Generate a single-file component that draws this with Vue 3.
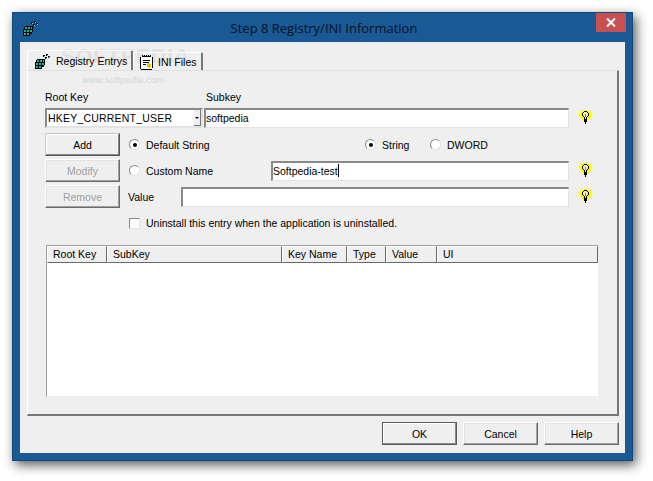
<template>
  <div class="desktop">
    <svg width="0" height="0" class="defs">
      <symbol id="bulb" viewBox="0 0 15 15">
        <path d="M7 0h1v1H7zM2 1h1v1H2zM12 1h1v1h-1zM5 1h5v1H5zM3 2h9v1H3zM2 3h11v6H2zM0 5h2v1H0zM13 5h2v1h-2zM3 9h9v1H3zM4 10h7v1H4zM1 10h1v1H1zM13 10h1v1h-1z" fill="#ffff00" shape-rendering="crispEdges" />
        <path d="M6 2h3v1H6zM5 3h1v1H5zM9 3h1v1H9zM4 4h1v3H4zM10 4h1v3h-1zM5 7h1v1H5zM9 7h1v1H9zM6 8h1v2H6zM8 8h1v2H8zM6 10h3v3H6zM7 13h1v2H7z" fill="#000" shape-rendering="crispEdges" />
        <path d="M6 3h3v1h1v3H9v1H6V7H5V4h1z" fill="#f4f4c0" shape-rendering="crispEdges" />
        <path d="M7 5h1v3H7z" fill="#8a8a30" shape-rendering="crispEdges" />
      </symbol>
      <symbol id="cubes" viewBox="0 0 16 16">
        <path d="M2 7h1V6h8v6h-1v2H8v2H1V9h1z" fill="#000" shape-rendering="crispEdges" />
        <path d="M9 2h2v2H9zM11 4h2v2h-2zM12 1h2v2h-2zM14 3h2v2h-2z" fill="#000" shape-rendering="crispEdges" />
        <path d="M3 7h2v2H3zM6 7h2v2H6zM9 7h1v2H9zM2 10h2v2H2zM5 10h2v2H5zM8 10h2v2H8zM2 13h2v2H2zM5 13h2v2H5z" fill="#19b5a5" shape-rendering="crispEdges" />
        <path d="M10 3h1v1h-1zM12 5h1v1h-1zM13 2h1v1h-1zM15 4h1v1h-1z" fill="#5de0d0" shape-rendering="crispEdges" />
      </symbol>
      <symbol id="notes" viewBox="0 0 16 16">
        <path d="M2 2h11v13H2z" fill="#fff" />
        <path d="M3 1h1v2H3zM5 1h1v2H5zM7 1h1v2H7zM9 1h1v2H9zM11 1h1v2h-1zM1 3h1v12H1zM13 3h1v11h-1zM2 15h11v1H2zM3 2h9v1H3zM4 6h7v1H4zM4 8h6v1H4zM4 10h3v1H4z" fill="#000" shape-rendering="crispEdges" />
        <path d="M8 10h4v3H8zM9 9h2v5H9z" fill="#d8c800" shape-rendering="crispEdges" />
      </symbol>
    </svg>

    <div class="window">
      <div class="titlebar">
        <svg class="app-icon" width="16" height="16"><use href="#cubes" /></svg>
        <span class="title">Step 8 Registry/INI Information</span>
        <div class="close">
          <svg width="10" height="9" viewBox="0 0 10 9">
            <path d="M1 .5l8 8M9 .5l-8 8" stroke="#fff" stroke-width="2" fill="none" />
          </svg>
        </div>
      </div>

      <div class="client">
        <div class="watermark">
          <div class="wm-big">SOFTPEDIA</div>
          <div class="wm-small">www.softpedia.com</div>
        </div>

        <div class="tabs">
          <div class="tab active">
            <svg width="16" height="16"><use href="#cubes" /></svg>
            <span>Registry Entrys</span>
          </div>
          <div class="tab second">
            <svg width="16" height="16"><use href="#notes" /></svg>
            <span>INI Files</span>
          </div>
        </div>

        <div class="page">
          <div class="key-labels">
            <span class="root-label">Root Key</span>
            <span>Subkey</span>
          </div>

          <div class="key-row">
            <div class="combo">
              <span>HKEY_CURRENT_USER</span>
              <div class="combo-arrow"></div>
            </div>
            <div class="edit subkey">softpedia</div>
            <svg class="bulb" width="15" height="15"><use href="#bulb" /></svg>
          </div>

          <div class="form">
            <div class="side-buttons">
              <div class="btn add">Add</div>
              <div class="btn disabled">Modify</div>
              <div class="btn disabled">Remove</div>
            </div>

            <div class="fields">
              <div class="field-row">
                <div class="radio-wrap name-col">
                  <span class="radio checked"></span>
                  <span>Default String</span>
                </div>
                <div class="radio-wrap string-col">
                  <span class="radio checked"></span>
                  <span>String</span>
                </div>
                <div class="radio-wrap">
                  <span class="radio"></span>
                  <span>DWORD</span>
                </div>
              </div>
              <div class="field-row">
                <div class="radio-wrap custom-col">
                  <span class="radio"></span>
                  <span>Custom Name</span>
                </div>
                <div class="edit custom-edit">Softpedia-test<i class="caret"></i></div>
                <svg class="bulb" width="15" height="15"><use href="#bulb" /></svg>
              </div>
              <div class="field-row">
                <span class="value-label">Value</span>
                <div class="edit value-edit"></div>
                <svg class="bulb" width="15" height="15"><use href="#bulb" /></svg>
              </div>
              <div class="check-row">
                <span class="checkbox"></span>
                <span>Uninstall this entry when the application is uninstalled.</span>
              </div>
            </div>
          </div>

          <div class="list">
            <div class="list-head">
              <div
                v-for="col in columns"
                :key="col.name"
                class="list-col"
                :style="{ width: col.width + 'px' }"
              >{{ col.name }}</div>
            </div>
          </div>
        </div>

        <div class="footer">
          <div class="btn ok">OK</div>
          <div class="btn">Cancel</div>
          <div class="btn">Help</div>
        </div>
      </div>
    </div>
  </div>
</template>

<script setup>
const columns = [
  { name: 'Root Key', width: 60 },
  { name: 'SubKey', width: 175 },
  { name: 'Key Name', width: 65 },
  { name: 'Type', width: 39 },
  { name: 'Value', width: 51 },
  { name: 'UI', width: 161 }
]
</script>

<style>
html, body {
  margin: 0;
  background: #fff;
}
</style>

<style scoped>
.desktop {
  width: 653px;
  height: 481px;
  padding: 12px 20px 20px 12px;
  box-sizing: border-box;
  overflow: hidden;
  background: #fff;
  font-family: "Liberation Sans", Arial, sans-serif;
  font-size: 10.5px;
  color: #000;
}

.defs {
  position: absolute;
}

.window {
  width: 621px;
  height: 449px;
  box-sizing: border-box;
  padding: 0 8px 8px;
  display: flex;
  flex-direction: column;
  background: #195a96;
  outline: 1px solid #12487a;
  outline-offset: -1px;
  box-shadow: 3px 4px 11px rgba(0, 0, 0, 0.65);
}

.titlebar {
  height: 30px;
  flex-shrink: 0;
  position: relative;
  display: flex;
  align-items: center;
  justify-content: center;
}

.app-icon {
  position: absolute;
  left: 2px;
  top: 8px;
}

.title {
  font-family: "Open Sans", sans-serif;
  font-size: 13px;
  color: #06101a;
  margin-top: 2px;
  margin-left: 3px;
  white-space: nowrap;
}

.close {
  position: absolute;
  right: -1px;
  top: 1px;
  width: 30px;
  height: 19px;
  background: #c75050;
  display: flex;
  align-items: center;
  justify-content: center;
}

.client {
  flex: 1;
  background: #efefef;
  padding: 8px 6px 0 7px;
  display: flex;
  flex-direction: column;
  position: relative;
}

/* faint stamp that lies over the tabs */
.watermark {
  position: absolute;
  left: 41px;
  top: 4px;
  width: 124px;
  text-align: center;
  pointer-events: none;
  z-index: 0;
}

.wm-big {
  font-size: 21px;
  line-height: 20px;
  letter-spacing: 1px;
  font-weight: 700;
  color: #e0e0e0;
}

.wm-small {
  font-size: 9.5px;
  line-height: 13px;
  margin-top: 7px;
  color: #d6d6d6;
}

.tabs {
  display: flex;
  height: 20px;
  align-items: flex-end;
  position: relative;
  z-index: 1;
}

.tab {
  box-sizing: border-box;
  display: flex;
  align-items: center;
  white-space: nowrap;
  border-top: 1px solid #fff;
  border-left: 1px solid #fff;
  border-right: 2px solid #777;
  border-radius: 2px 2px 0 0;
}

.tab.second {
  height: 18px;
  width: 70px;
  padding-left: 5px;
  gap: 3px;
}

.tab.active {
  height: 21px;
  width: 106px;
  gap: 6px;
  padding-left: 6px;
  margin-bottom: -1px;
}

.page {
  height: 346px;
  width: 592px;
  box-sizing: border-box;
  position: relative;
  z-index: 1;
  padding: 19px 0 0 17px;
  border-top: 1px solid #e0e0e0;
  border-left: 1px solid #fff;
  border-right: 2px solid #777;
  border-bottom: 2px solid #777;
}

.key-labels {
  display: flex;
  height: 14px;
  line-height: 14px;
}

.root-label {
  width: 161px;
}

.key-row {
  margin-top: 4px;
  display: flex;
  align-items: center;
  height: 20px;
}

.combo {
  width: 158px;
  height: 20px;
  box-sizing: border-box;
  background: #fff;
  border: 2px solid #8a8a8a;
  border-right-color: #e3e3e3;
  border-bottom-color: #e3e3e3;
  padding-left: 1px;
  line-height: 17px;
  position: relative;
  white-space: nowrap;
  letter-spacing: 0.2px;
}

.combo-arrow {
  position: absolute;
  right: 0;
  top: 0;
  bottom: 0;
  width: 6px;
  background: #efefef;
  border-right: 1px solid #777;
  border-bottom: 1px solid #777;
}

.combo-arrow::after {
  content: "";
  position: absolute;
  left: 1px;
  top: 7px;
  border-left: 2px solid transparent;
  border-right: 2px solid transparent;
  border-top: 2px solid #000;
}

.edit {
  box-sizing: border-box;
  height: 20px;
  background: #fff;
  border: 2px solid #8a8a8a;
  border-right: 1px solid #e3e3e3;
  border-bottom: 1px solid #e3e3e3;
  line-height: 17px;
}

.subkey {
  width: 365px;
  margin-left: 1px;
}

.bulb {
  margin: -3px 0 0 9px;
  flex-shrink: 0;
}

.form {
  margin-top: 5px;
  display: flex;
}

.side-buttons {
  display: flex;
  flex-direction: column;
  gap: 3px;
}

.btn {
  width: 75px;
  height: 23px;
  box-sizing: border-box;
  background: #efefef;
  border: 1px solid;
  border-color: #fff #6a6a6a #6a6a6a #fff;
  box-shadow: inset -1px -1px 0 #a0a0a0, inset 1px 1px 0 #e3e3e3;
  display: flex;
  align-items: center;
  justify-content: center;
}

.btn.add {
  border-color: #c8c8c8 #555 #555 #c8c8c8;
  box-shadow: inset -1px -1px 0 #8a8a8a, inset 1px 1px 0 #fff;
}

.btn.ok {
  border-color: #5a5a5a;
  box-shadow: inset -1px -1px 0 #8a8a8a, inset 1px 1px 0 #fff;
}

.btn.disabled {
  color: #a0a0a0;
}

.fields {
  margin-left: 8px;
  flex: 1;
}

.field-row {
  height: 23px;
  margin-bottom: 3px;
  display: flex;
  align-items: center;
}

.radio-wrap {
  display: flex;
  align-items: center;
  padding-left: 1px;
  gap: 6px;
}

.name-col {
  width: 235px;
}

.string-col {
  width: 64px;
}

.custom-col {
  width: 142px;
}

.radio {
  width: 11px;
  height: 11px;
  box-sizing: border-box;
  border-radius: 50%;
  background: #fff;
  border: 1px solid;
  border-color: #8a8a8a #e3e3e3 #e3e3e3 #8a8a8a;
  position: relative;
}

.radio.checked::after {
  content: "";
  position: absolute;
  left: 3px;
  top: 3px;
  width: 4px;
  height: 4px;
  border-radius: 50%;
  background: #000;
}

.custom-edit {
  width: 298px;
}

.caret {
  display: inline-block;
  width: 1px;
  height: 13px;
  background: #000;
  vertical-align: -2px;
}

.value-label {
  width: 53px;
}

.value-edit {
  width: 388px;
}

.check-row {
  margin-top: 9px;
  padding-left: 1px;
  display: flex;
  align-items: center;
  gap: 6px;
}

.checkbox {
  width: 11px;
  height: 11px;
  box-sizing: border-box;
  background: #fff;
  border: 1px solid;
  border-color: #8a8a8a #e3e3e3 #e3e3e3 #8a8a8a;
}

.list {
  margin: 16px 0 0 1px;
  width: 553px;
  height: 152px;
  box-sizing: border-box;
  background: #fff;
  border: 1px solid #a0a0a0;
  border-right-color: #efefef;
  border-bottom-color: #efefef;
}

.list-head {
  display: flex;
  height: 17px;
}

.list-col {
  box-sizing: border-box;
  background: #efefef;
  padding-left: 5px;
  line-height: 15px;
  border-top: 1px solid #fff;
  border-left: 1px solid #fff;
  border-right: 1px solid #6a6a6a;
  border-bottom: 1px solid #6a6a6a;
  white-space: nowrap;
}

.footer {
  margin-top: 6px;
  display: flex;
  gap: 6px;
  justify-content: flex-end;
}
</style>
